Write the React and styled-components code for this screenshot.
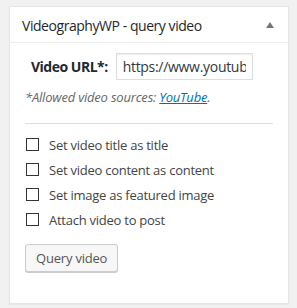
import React from "react";
import styled, { createGlobalStyle } from "styled-components";

const GlobalStyle = createGlobalStyle`
  body {
    margin: 0;
    background: #f1f1f1;
    font-family: "Open Sans", "Noto Sans", sans-serif;
    color: #444;
  }
`;

const Page = styled.div`
  padding: 6px 8px 8px 9px;
`;

const Box = styled.div`
  width: 278px;
  background: #fff;
  border: 1px solid #e5e5e5;
  box-shadow: 0 1px 1px rgba(0, 0, 0, 0.04);
`;

const Header = styled.div`
  display: flex;
  align-items: center;
  justify-content: space-between;
  height: 36px;
  padding: 1px 12px 0;
  box-sizing: border-box;
  border-bottom: 1px solid #eee;
`;

const Title = styled.h2`
  margin: 0;
  font-size: 14px;
  font-weight: 400;
  letter-spacing: -0.45px;
  color: #23282d;
`;

const Toggle = styled.span`
  width: 0;
  height: 0;
  margin-right: 2px;
  border-left: 4px solid transparent;
  border-right: 4px solid transparent;
  border-bottom: 6px solid #72777c;
`;

const Inside = styled.div`
  padding: 10px 15px 31px;
`;

const UrlRow = styled.div`
  display: flex;
  align-items: center;
  padding-left: 6px;
`;

const Label = styled.label`
  font-size: 14px;
  font-weight: 700;
  letter-spacing: -0.5px;
  color: #23282d;
  margin-right: 8px;
`;

const UrlInput = styled.input`
  box-sizing: border-box;
  width: 137px;
  height: 27px;
  padding: 0 6px;
  border: 1px solid #ddd;
  box-shadow: inset 0 1px 2px rgba(0, 0, 0, 0.07);
  font-family: inherit;
  font-size: 14px;
  letter-spacing: -0.3px;
  color: #32373c;
  outline: none;
`;

const Note = styled.p`
  margin: 8px 0 0;
  font-size: 13px;
  font-style: italic;
  letter-spacing: -0.2px;
  color: #666;

  a {
    color: #0073aa;
  }
`;

const Rule = styled.hr`
  margin: 17px 0 11px;
  border: 0;
  border-top: 1px solid #ddd;
`;

const Options = styled.div`
  display: flex;
  flex-direction: column;
  gap: 6px;
`;

const Option = styled.label`
  display: flex;
  align-items: center;
  gap: 10px;
  height: 19px;
  font-size: 13px;
  letter-spacing: -0.25px;
  color: #444;
`;

const Check = styled.input`
  appearance: none;
  margin: 0 0 0 1px;
  width: 13px;
  height: 13px;
  border: 1px solid #333;
  background: #fff;
`;

const Button = styled.button`
  margin-top: 15px;
  height: 28px;
  padding: 0 10px;
  font-family: inherit;
  font-size: 13px;
  letter-spacing: -0.2px;
  color: #555;
  background: #f7f7f7;
  border: 1px solid #ccc;
  border-radius: 3px;
  box-shadow: 0 1px 0 #ccc;
`;

const options = [
  "Set video title as title",
  "Set video content as content",
  "Set image as featured image",
  "Attach video to post",
];

export default function App() {
  return (
    <Page>
      <GlobalStyle />
      <Box>
        <Header>
          <Title>VideographyWP - query video</Title>
          <Toggle />
        </Header>
        <Inside>
          <UrlRow>
            <Label htmlFor="video-url">Video URL*:</Label>
            <UrlInput id="video-url" defaultValue="https://www.youtube.com/" />
          </UrlRow>
          <Note>
            *Allowed video sources: <a href="#">YouTube</a>.
          </Note>
          <Rule />
          <Options>
            {options.map((o) => (
              <Option key={o}>
                <Check type="checkbox" />
                {o}
              </Option>
            ))}
          </Options>
          <Button>Query video</Button>
        </Inside>
      </Box>
    </Page>
  );
}
